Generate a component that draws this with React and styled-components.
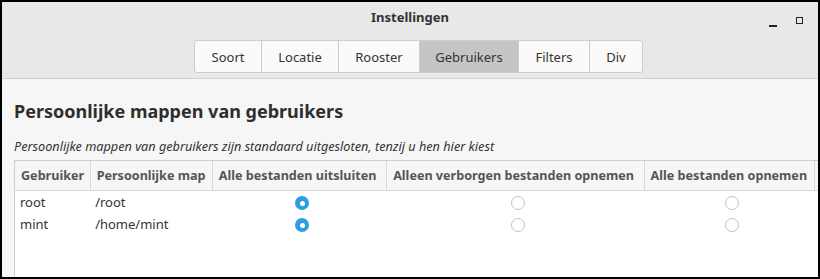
import React from "react"
import styled, { createGlobalStyle } from "styled-components"

const GlobalStyle = createGlobalStyle`
    html, body {
        margin: 0;
        padding: 0;
        background: #000;
    }
    body {
        font-family: 'Noto Sans', 'Open Sans', sans-serif;
    }
`

const Frame = styled.div`
    width: 820px;
    height: 279px;
    box-sizing: border-box;
    padding: 2px 2px 2px 2px;
    background: #000;
    overflow: hidden;
`

const Window = styled.div`
    display: flex;
    flex-direction: column;
    height: 275px;
    overflow: hidden;
    background: #f6f6f6;
`

const HeaderBar = styled.div`
    display: flex;
    flex-direction: column;
    align-items: center;
    height: 77px;
    box-sizing: border-box;
    background: #e8e8e8;
    border-bottom: 1px solid #d2d2d2;
`

const TitleRow = styled.div`
    position: relative;
    width: 100%;
    height: 30px;
    display: flex;
    align-items: center;
    justify-content: center;
`

const Title = styled.span`
    font-size: 13px;
    font-weight: 700;
    color: #333;
`

const Controls = styled.div`
    position: absolute;
    right: 15px;
    top: 11px;
    display: flex;
    align-items: center;
    gap: 19px;
`

const Minimize = styled.span`
    display: block;
    width: 8px;
    height: 1.5px;
    margin-top: 12px;
    background: #222;
`

const Maximize = styled.span`
    display: block;
    width: 5px;
    height: 5px;
    border: 1.5px solid #222;
    margin-top: 1px;
`

const TabGroup = styled.div`
    display: flex;
    height: 33px;
    margin: 8px 0 0 17px;
    box-sizing: border-box;
    border: 1px solid #cdcdcd;
    border-radius: 3px;
    background: #fafafa;
    overflow: hidden;
`

const Tab = styled.div`
    width: ${props => props.width}px;
    display: flex;
    align-items: center;
    justify-content: center;
    font-size: 13px;
    color: #333;
    background: ${props => props.active ? '#c5c5c5' : 'transparent'};
    & + & {
        border-left: 1px solid #cdcdcd;
    }
`

const Content = styled.div`
    flex: 1;
    display: flex;
    flex-direction: column;
    padding-left: 12px;
    min-height: 0;
`

const Heading = styled.h1`
    margin: 19px 0 0 0;
    font-size: 18px;
    line-height: 26px;
    font-weight: 700;
    color: #2e2e2e;
`

const Description = styled.p`
    margin: 13px 0 0 0;
    font-size: 12.7px;
    line-height: 18px;
    font-style: italic;
    color: #333;
`

const TableFrame = styled.div`
    flex: 1;
    margin-top: 5px;
    border-top: 1px solid #cdcdcd;
    border-left: 1px solid #cdcdcd;
    background: #fff;
    overflow: hidden;
`

const Table = styled.table`
    border-collapse: collapse;
    table-layout: fixed;
    width: 830px;
`

const HeadCell = styled.th`
    width: ${props => props.width}px;
    height: 29px;
    padding: 0 0 0 6px;
    box-sizing: border-box;
    text-align: left;
    font-size: 12.6px;
    font-weight: 700;
    color: #555;
    background: #f6f6f6;
    border-right: 1px solid #d8d8d8;
    border-bottom: 1px solid #d8d8d8;
    white-space: nowrap;
    overflow: hidden;
`

const Cell = styled.td`
    height: 22px;
    padding: 0 0 0 5px;
    font-size: 13px;
    color: #333;
    text-align: ${props => props.center ? 'center' : 'left'};
    vertical-align: middle;
    white-space: nowrap;
`

const Radio = styled.span`
    display: inline-flex;
    align-items: center;
    justify-content: center;
    width: 14px;
    height: 14px;
    box-sizing: border-box;
    border-radius: 50%;
    vertical-align: middle;
    background: ${props => props.checked ? '#2b9fe0' : '#fff'};
    border: ${props => props.checked ? 'none' : '1px solid #c4c4c4'};
    &::after {
        content: '';
        display: ${props => props.checked ? 'block' : 'none'};
        width: 5px;
        height: 5px;
        border-radius: 50%;
        background: #fff;
    }
`

const tabs = [
    { label: 'Soort', width: 66 },
    { label: 'Locatie', width: 76 },
    { label: 'Rooster', width: 80 },
    { label: 'Gebruikers', width: 98, active: true },
    { label: 'Filters', width: 70 },
    { label: 'Div', width: 52 },
]

const columns = [
    { label: 'Gebruiker', width: 75 },
    { label: 'Persoonlijke map', width: 122 },
    { label: 'Alle bestanden uitsluiten', width: 174 },
    { label: 'Alleen verborgen bestanden opnemen', width: 257 },
    { label: 'Alle bestanden opnemen', width: 170 },
    { label: '', width: 30 },
]

const users = [
    { name: 'root', home: '/root', choice: 0 },
    { name: 'mint', home: '/home/mint', choice: 0 },
]

export default function App() {
    return (
        <>
            <GlobalStyle />
            <Frame>
                <Window>
                    <HeaderBar>
                        <TitleRow>
                            <Title>Instellingen</Title>
                            <Controls>
                                <Minimize />
                                <Maximize />
                            </Controls>
                        </TitleRow>
                        <TabGroup>
                            {tabs.map(t => (
                                <Tab key={t.label} width={t.width} active={t.active}>{t.label}</Tab>
                            ))}
                        </TabGroup>
                    </HeaderBar>
                    <Content>
                        <Heading>Persoonlijke mappen van gebruikers</Heading>
                        <Description>Persoonlijke mappen van gebruikers zijn standaard uitgesloten, tenzij u hen hier kiest</Description>
                        <TableFrame>
                            <Table>
                                <thead>
                                    <tr>
                                        {columns.map((c, i) => (
                                            <HeadCell key={i} width={c.width}>{c.label}</HeadCell>
                                        ))}
                                    </tr>
                                </thead>
                                <tbody>
                                    {users.map(u => (
                                        <tr key={u.name}>
                                            <Cell>{u.name}</Cell>
                                            <Cell>{u.home}</Cell>
                                            {[0, 1, 2].map(n => (
                                                <Cell key={n} center><Radio checked={u.choice === n} /></Cell>
                                            ))}
                                            <Cell />
                                        </tr>
                                    ))}
                                </tbody>
                            </Table>
                        </TableFrame>
                    </Content>
                </Window>
            </Frame>
        </>
    )
}
